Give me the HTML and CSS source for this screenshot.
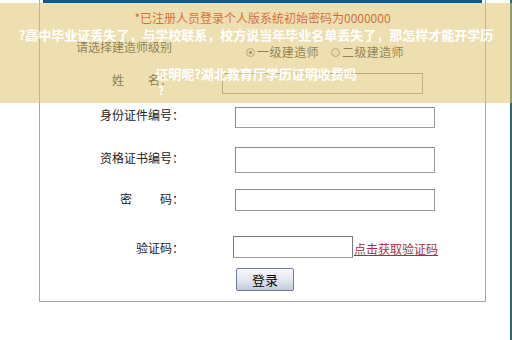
FILE: index.html
```html
<!DOCTYPE html>
<html lang="zh-CN">
<head>
<meta charset="utf-8">
<title>登录</title>
<link rel="stylesheet" href="styles.css">
</head>
<body>
<div class="frame">
  <div class="panel">
    <div class="bar"></div>
    <div class="notice">*已注册人员登录个人版系统初始密码为0000000</div>
    <div class="level">
      <span class="level-lbl">请选择建造师级别</span>
      <span class="radios">
        <span class="radio checked"></span><span class="rtext">一级建造师</span>
        <span class="radio second"></span><span class="rtext">二级建造师</span>
      </span>
    </div>
    <div class="row name">
      <span class="lbl lbl-name">姓<span class="sp-name"></span>名：</span>
      <span class="input in-name"></span>
    </div>
    <div class="row idno">
      <span class="lbl">身份证件编号：</span>
      <span class="input in-wide h21"></span>
    </div>
    <div class="row cert">
      <span class="lbl">资格证书编号：</span>
      <span class="input in-wide h26"></span>
    </div>
    <div class="row pwd">
      <span class="lbl">密<span class="sp-pwd"></span>码：</span>
      <span class="input in-wide h22"></span>
    </div>
    <div class="row code">
      <span class="lbl">验证码：</span>
      <span class="input in-code"></span>
      <a class="getcode" href="#">点击获取验证码</a>
    </div>
    <div class="row btnrow">
      <span class="lbl"></span>
      <span class="btn">登录</span>
    </div>
  </div>
</div>
<div class="overlay">
  <div class="ov1">?高中毕业证丢失了，与学校联系，校方说当年毕业名单丢失了，那怎样才能开学历</div>
  <div class="ov-wrap">
    <div class="ov2">证明呢?湖北教育厅学历证明收费吗</div>
    <div class="ov3">?</div>
  </div>
</div>
</body>
</html>
```
FILE: styles.css
```css
html, body {
  margin: 0;
  padding: 0;
}
body {
  width: 512px;
  height: 340px;
  overflow: hidden;
  background: #fff;
  position: relative;
  font-family: "Noto Sans CJK SC", "Noto Sans", sans-serif;
}
.frame {
  height: 340px;
  box-sizing: border-box;
  border-right: 2px solid #2f6a74;
  padding-left: 39px;
}
.panel {
  width: 447px;
  height: 302px;
  box-sizing: border-box;
  border: 1px solid #a6a6a6;
  border-top: 0;
}
.bar {
  height: 3px;
  margin: 0 3px;
  background: #0b5a92;
}
.notice {
  height: 30px;
  line-height: 30px;
  text-align: center;
  font-size: 12px;
  color: #cc0000;
}
.level {
  height: 34px;
  display: flex;
  padding-left: 36px;
  font-size: 12px;
  line-height: 14px;
  color: #333;
}
.level-lbl {
  margin-top: 7px;
  width: 96px;
}
.radios {
  margin-left: 74px;
  margin-top: 12px;
  display: flex;
  align-items: center;
  height: 14px;
}
.radio {
  width: 9px;
  height: 9px;
  box-sizing: border-box;
  border: 1px solid #8c8c8c;
  border-radius: 50%;
  background: #f4f4f4;
  margin-right: 2px;
  position: relative;
}
.radio.checked::after {
  content: "";
  position: absolute;
  left: 2px;
  top: 2px;
  width: 3px;
  height: 3px;
  border-radius: 50%;
  background: #555;
}
.radio.second {
  margin-left: 12px;
}
.rtext {
  letter-spacing: 0.4px;
}
.row {
  display: flex;
  align-items: flex-start;
  font-size: 12px;
  line-height: 14px;
  color: #222;
}
.lbl {
  width: 144px;
  flex: none;
  text-align: right;
  white-space: nowrap;
}
.input {
  flex: none;
  display: block;
  box-sizing: border-box;
  border: 1px solid #9c9c9c;
  border-top-color: #8a8a8a;
  border-left-color: #8a8a8a;
  background: #fff;
}
.name {
  margin-top: 6px;
}
.lbl-name {
  width: 132px;
}
.sp-name {
  display: inline-block;
  width: 24px;
}
.in-name {
  margin-left: 50px;
  width: 201px;
  height: 21px;
}
.in-wide {
  margin-left: 51px;
  width: 200px;
}
.h21 { height: 21px; }
.h22 { height: 22px; }
.h26 { height: 26px; }
.idno {
  margin-top: 13px;
}
.idno .lbl { margin-top: 1px; }
.cert {
  margin-top: 19px;
}
.cert .lbl { margin-top: 4px; }
.pwd {
  margin-top: 16px;
}
.pwd .lbl { margin-top: 3px; }
.sp-pwd {
  display: inline-block;
  width: 28px;
}
.code {
  margin-top: 25px;
}
.code .lbl { margin-top: 5px; }
.in-code {
  margin-left: 49px;
  width: 120px;
  height: 22px;
  border-color: #7a7a7a;
  border-bottom-color: #9c9c9c;
}
.getcode {
  margin-left: 1px;
  margin-top: 6px;
  color: #a8303e;
  text-decoration: underline;
  white-space: nowrap;
}
.btnrow {
  margin-top: 10px;
}
.btn {
  margin-left: 52px;
  width: 58px;
  height: 23px;
  box-sizing: border-box;
  border: 1px solid #6d7c98;
  border-radius: 2px;
  background: linear-gradient(#f7f8fb, #e4e8f0 50%, #c3cbdc);
  font-size: 13px;
  line-height: 21px;
  text-align: center;
  color: #000;
}
.overlay {
  position: absolute;
  left: 0;
  top: 3px;
  width: 512px;
  height: 100px;
  background: rgba(223, 197, 112, 0.55);
  text-align: center;
  color: #fff;
  font-weight: 700;
  font-size: 13px;
}
.ov1 {
  margin-top: 24px;
  line-height: 16px;
  white-space: nowrap;
}
.ov-wrap {
  display: inline-block;
  text-align: left;
  margin-top: 23px;
}
.ov2 {
  line-height: 16px;
  white-space: nowrap;
}
.ov3 {
  font-size: 11px;
  line-height: 12px;
  margin-top: 2px;
  padding-left: 3px;
}
```
